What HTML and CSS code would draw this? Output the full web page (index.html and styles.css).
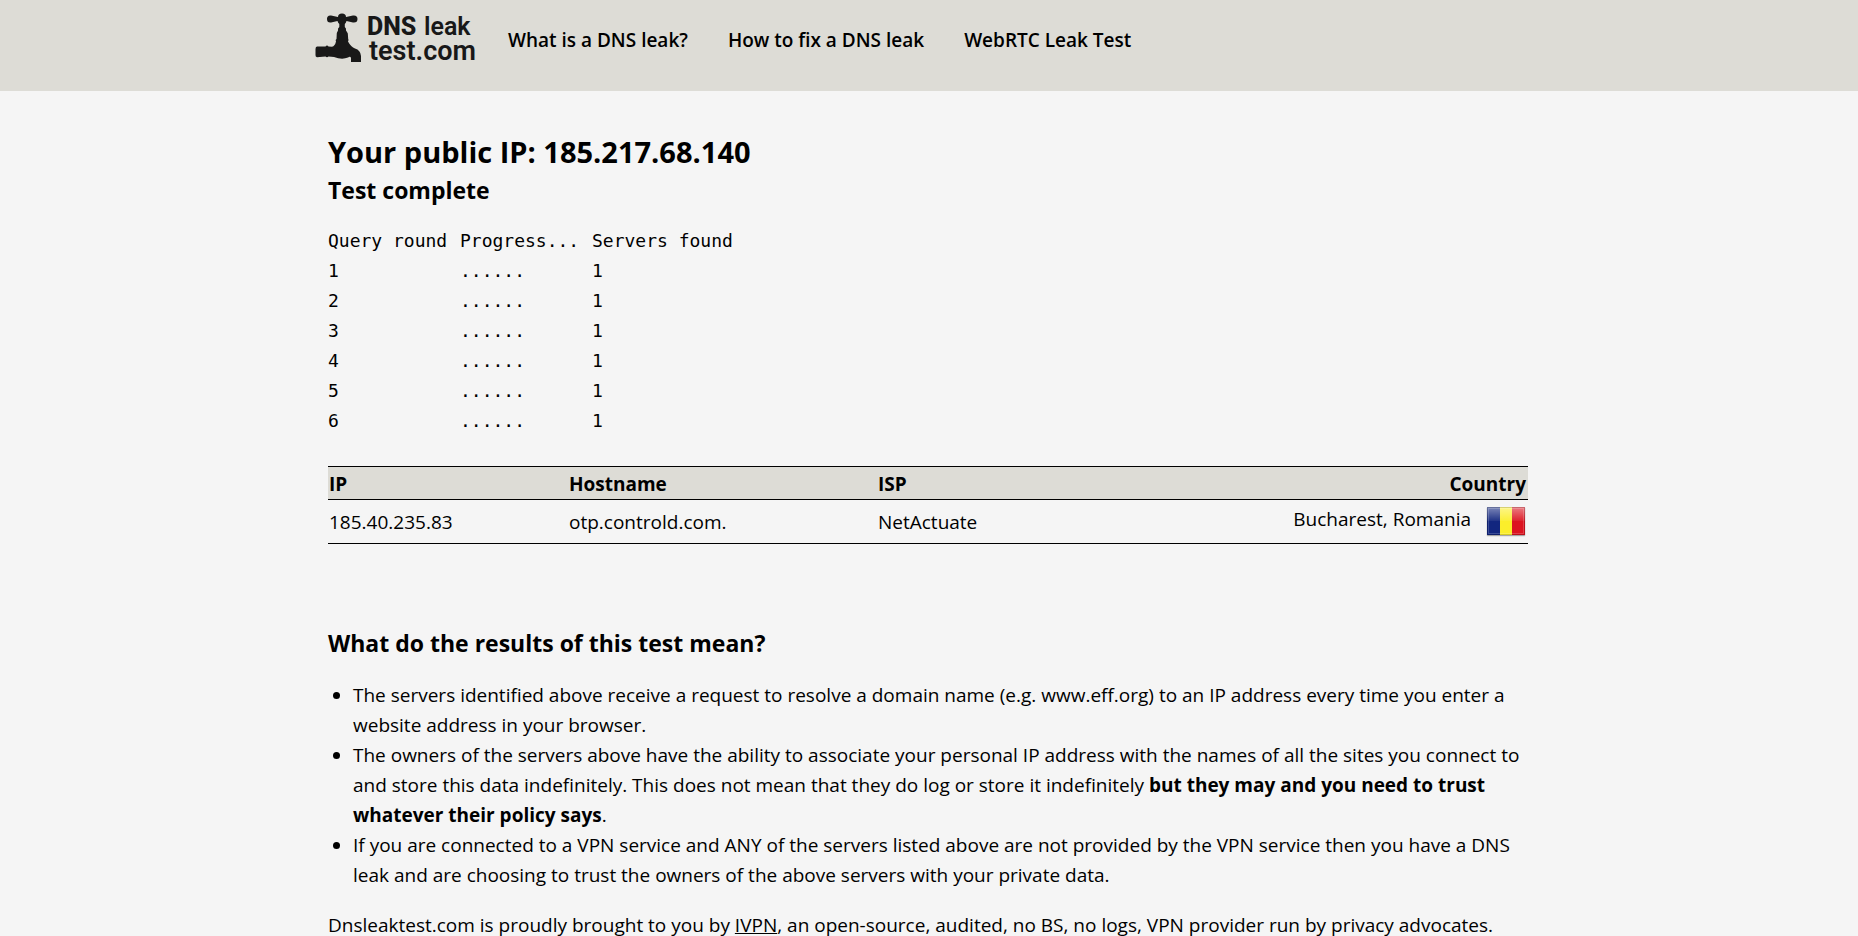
FILE: index.html
```html
<!DOCTYPE html>
<html lang="en">
<head>
<meta charset="utf-8">
<meta name="viewport" content="width=device-width, initial-scale=1">
<title>DNS leak test</title>
<link rel="stylesheet" href="styles.css">
</head>
<body>
<header class="header">
  <div class="header-inner">
    <a class="logo" href="/" aria-label="DNS leak test.com">
      <svg class="logo-art" viewBox="0 0 165 66" role="img" aria-hidden="true">
        <g fill="#181818">
          <path d="M12 19Q12 15 16 15.500L23 17Q23 13.500 27 13.500Q31 13.500 31 17L38 15.500Q42.500 15 42.500 19Q42.500 23 38 22.500L31.500 21Q31 23 29.800 24L29.800 27Q31.500 28 31 30.500L32 32L32.800 33.500L33.200 39Q34 39.500 33 41.500Q36 47 40 48.500Q45.500 50 46 56V62H36V58Q35.500 56 33 57.500Q27 60 19 57L13.500 56.500Q12 58 10.500 56.500L2 57.300Q0.300 57 0.500 55V49Q0.500 46.500 2 46.500L10.500 46.500Q12 44.500 13.500 46.500L17 46.800Q20 46 21 41.500Q20 39.500 21.500 39L21.800 33L23 30.500Q22.500 28 24.300 27L24.300 24Q23 23 22.500 21L16 22.500Q12 23 12 19Z"/>
          <text class="logo-dns" x="52" y="35">DNS</text>
          <text class="logo-name" x="109" y="35">leak</text>
          <text class="logo-site" x="54" y="60">test.com</text>
        </g>
      </svg>
    </a>
    <nav class="nav">
      <a href="#what">What is a DNS leak?</a>
      <a href="#fix">How to fix a DNS leak</a>
      <a href="#webrtc">WebRTC Leak Test</a>
    </nav>
  </div>
</header>
<main class="content">
  <h1>Your public IP: 185.217.68.140</h1>
  <h2 class="status">Test complete</h2>
  <table class="progress">
    <thead><tr><th scope="col">Query round</th><th scope="col">Progress...</th><th scope="col">Servers found</th></tr></thead>
    <tbody>
      <tr><td>1</td><td>......</td><td>1</td></tr>
      <tr><td>2</td><td>......</td><td>1</td></tr>
      <tr><td>3</td><td>......</td><td>1</td></tr>
      <tr><td>4</td><td>......</td><td>1</td></tr>
      <tr><td>5</td><td>......</td><td>1</td></tr>
      <tr><td>6</td><td>......</td><td>1</td></tr>
    </tbody>
  </table>
  <table class="results">
    <colgroup><col class="col-ip"><col class="col-host"><col class="col-isp"><col></colgroup>
    <thead><tr><th scope="col">IP</th><th scope="col">Hostname</th><th scope="col">ISP</th><th scope="col" class="country">Country</th></tr></thead>
    <tbody>
      <tr>
        <td>185.40.235.83</td><td>otp.controld.com.</td><td>NetActuate</td>
        <td class="country"><div class="place"><span class="city">Bucharest, Romania</span>
          <svg class="flag" viewBox="0 0 40 32" aria-hidden="true">
            <defs>
              <linearGradient id="gloss" x1="0" y1="0" x2="0" y2="1"><stop offset="0" stop-color="#fff" stop-opacity=".45"/><stop offset="1" stop-color="#fff" stop-opacity=".06"/></linearGradient>
            </defs>
            <rect x="0.500" y="2" width="39" height="29.500" rx="1.500" fill="#000" opacity=".12"/>
            <rect x="1" y="2" width="38" height="29" rx="1" fill="#777" opacity=".5"/>
            <path fill="#12267f" d="M1 2h13v28H1z"/>
            <path fill="#fbee2b" d="M14 2h12v28H14z"/>
            <path fill="#dc1420" d="M26 2h13v28H26z"/>
            <path fill="url(#gloss)" d="M1 2h38v14H1z"/>
            <rect x="2.500" y="3.500" width="35" height="25" fill="none" stroke="#fff" stroke-opacity=".18"/>
            <rect x="1.500" y="2.500" width="37" height="27" fill="none" stroke="#000" stroke-opacity=".15"/>
          </svg></div></td>
      </tr>
    </tbody>
  </table>
  <h2 class="meaning">What do the results of this test mean?</h2>
  <ul>
    <li>The servers identified above receive a request to resolve a domain name (e.g. www.eff.org) to an IP address every time you enter a website address in your browser.</li>
    <li>The owners of the servers above have the ability to associate your personal IP address with the names of all the sites you connect to and store this data indefinitely. This does not mean that they do log or store it indefinitely <strong>but they may and you need to trust whatever their policy says</strong>.</li>
    <li>If you are connected to a VPN service and ANY of the servers listed above are not provided by the VPN service then you have a DNS leak and are choosing to trust the owners of the above servers with your private data.</li>
  </ul>
  <p>Dnsleaktest.com is proudly brought to you by <a href="#ivpn">IVPN</a>, an open-source, audited, no BS, no logs, VPN provider run by privacy advocates.</p>
</main>
</body>
</html>
```
FILE: styles.css
```css
* { box-sizing: border-box; }
html { overflow-x: hidden; scrollbar-width: none; }
body {
  margin: 0;
  background: #f5f5f5;
  color: #000;
  font: 19px/30px "Open Sans", "Noto Sans", sans-serif;
}
a { color: inherit; }
.header { background: #dddcd6; padding-bottom: 25px; }
.header-inner {
  display: flex;
  align-items: flex-start;
  gap: 28px;
  max-width: 1228px;
  margin: 0 auto;
}
.logo { flex: none; display: block; }
.logo-art { display: block; width: 165px; height: 66px; }
.logo-dns, .logo-name, .logo-site { font-family: Roboto, "Liberation Sans", sans-serif; font-size: 25px; font-weight: 600; }
.logo-dns { font-weight: 800; }
.logo-site { font-size: 27px; }
.nav { display: flex; flex-wrap: wrap; gap: 0 40px; padding-top: 25px; font-weight: 600; }
.nav a { text-decoration: none; }
.content { max-width: 1202px; margin: 0 auto; padding: 39px 2px 40px 0; }
h1, h2 { margin: 0; font-weight: 700; }
h1 { font-size: 29px; line-height: 44px; }
h2 { font-size: 23px; line-height: 32px; }
table { border-collapse: collapse; table-layout: fixed; }
th { text-align: left; }
th, td { padding: 0; }
.progress { width: 420px; margin-top: 20px; font: 18px/30px "DejaVu Sans Mono", monospace; }
.progress th { font-weight: 400; white-space: nowrap; }
.progress th:nth-child(-n+2) { width: 132px; }
.results { width: 100%; margin-top: 30px; }
.results tr { border-top: 1px solid #000; border-bottom: 1px solid #000; }
.results th { height: 33px; padding: 2px 1px 0; background: #dddcd6; line-height: 28px; }
.results td { height: 44px; padding: 0 1px; }
.results .country { padding-right: 2px; text-align: right; }
.col-ip { width: 240px; }
.col-host { width: 309px; }
.col-isp { width: 26%; }
.place { display: flex; justify-content: flex-end; align-items: flex-end; gap: 15px; padding-bottom: 3px; }
.city { padding-bottom: 3px; }
.flag { display: block; flex: none; width: 40px; height: 32px; }
.meaning { margin-top: 83px; }
ul { margin: 21px 0 20px; padding-left: 25px; }
p { margin: 0; }
```
